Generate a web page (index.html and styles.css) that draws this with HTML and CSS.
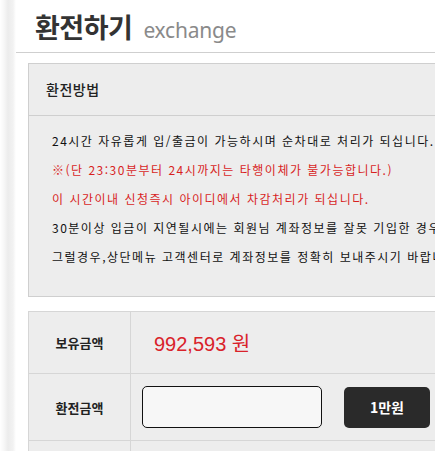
FILE: index.html
```html
<!DOCTYPE html>
<html lang="ko">
<head>
    <meta charset="UTF-8">
    <meta name="viewport" content="width=device-width, initial-scale=1.0">
    <title>환전하기</title>
    <link rel="stylesheet" href="styles.css">
</head>
<body>
    <div class="side"></div>

    <div class="content">
        <!-- Page title -->
        <div class="title">
            <h1>환전하기</h1>
            <span class="sub">exchange</span>
        </div>

        <!-- How to exchange -->
        <div class="guide">
            <div class="guide-head">환전방법</div>
            <div class="guide-body">
                <p>24시간 자유롭게 입/출금이 가능하시며 순차대로 처리가 되십니다.</p>
                <p class="red">※(단 23:30분부터 24시까지는 타행이체가 불가능합니다.)</p>
                <p class="red">이 시간이내 신청즉시 아이디에서 차감처리가 되십니다.</p>
                <p>30분이상 입금이 지연될시에는 회원님 계좌정보를 잘못 기입한 경우</p>
                <p>그럴경우,상단메뉴 고객센터로 계좌정보를 정확히 보내주시기 바랍니다.</p>
            </div>
        </div>

        <!-- Exchange form -->
        <div class="form-table">
            <div class="row">
                <div class="label">보유금액</div>
                <div class="value"><span class="money">992,593 원</span></div>
            </div>
            <div class="row row-input">
                <div class="label">환전금액</div>
                <div class="value">
                    <input type="text" class="amount" value="">
                    <button class="btn">1만원</button>
                </div>
            </div>
            <div class="row row-last">
                <div class="label"></div>
                <div class="value"></div>
            </div>
        </div>
    </div>
</body>
</html>
```

FILE: styles.css
```css
/* General page */
body {
    margin: 0;
    padding: 0;
    background-color: white;
    display: flex;
    overflow: hidden;
    height: 100vh;
    font-family: "Noto Sans CJK KR", "Noto Sans", sans-serif;
    color: #222;
}

.side {
    flex: 0 0 16px;
    background: linear-gradient(to right, #ffffff 0px, #f7f7f7 4px, #ececec 8px, #f2f2f2 13px, #ffffff 16px);
}

.content {
    flex: 0 0 520px;
}

/* Title */
.title {
    display: flex;
    align-items: baseline;
    padding: 9px 0 0 19px;
    height: 53px;
    box-sizing: border-box;
    border-bottom: 1px solid #cfcfcf;
}

.title h1 {
    margin: 0;
    font-size: 27px;
    font-weight: 700;
    color: #333;
    line-height: 36px;
    letter-spacing: -0.5px;
}

.title .sub {
    margin-left: 11px;
    font-family: "Noto Sans", sans-serif;
    font-size: 21px;
    color: #8a8a8a;
    letter-spacing: -0.2px;
}

/* Guide box */
.guide {
    margin: 10px 0 0 12px;
    border: 1px solid #cfcfcf;
    background-color: #ededed;
}

.guide-head {
    height: 51px;
    line-height: 51px;
    padding-left: 17px;
    font-size: 14px;
    font-weight: 500;
    letter-spacing: 0.5px;
    color: #222;
    border-bottom: 1px solid #cfcfcf;
}

.guide-body {
    padding: 10px 0 25px 23px;
}

.guide-body p {
    margin: 0;
    font-size: 12px;
    line-height: 29px;
    letter-spacing: 1.5px;
    white-space: nowrap;
    color: #111;
}

.guide-body .red {
    color: #d81f1f;
}

/* Form table */
.form-table {
    margin: 14px 0 0 12px;
    border-top: 1px solid #d6d6d6;
    border-left: 1px solid #d6d6d6;
    background-color: #ededed;
}

.row {
    display: flex;
    height: 61px;
    border-bottom: 1px solid #d6d6d6;
}

.row-input {
    height: 66px;
}

.label {
    flex: 0 0 101px;
    border-right: 1px solid #d6d6d6;
    display: flex;
    align-items: center;
    justify-content: center;
    font-size: 13px;
    font-weight: 700;
    color: #222;
}

.value {
    flex: 1;
    display: flex;
    align-items: center;
    padding-left: 11px;
}

.money {
    padding-left: 12px;
    font-family: "Liberation Sans", "Noto Sans CJK KR", sans-serif;
    font-size: 20px;
    color: #d9222a;
}

.amount {
    width: 180px;
    height: 42px;
    box-sizing: border-box;
    border: 1px solid #111;
    border-radius: 5px;
    background-color: #f7f7f7;
    padding: 0 8px;
    font-size: 14px;
}

.btn {
    margin-left: 22px;
    width: 86px;
    height: 41px;
    border: none;
    border-radius: 5px;
    background-color: #2a2a2a;
    color: white;
    font-family: "Noto Sans CJK KR", sans-serif;
    font-size: 14px;
    font-weight: 700;
    cursor: pointer;
}
```
